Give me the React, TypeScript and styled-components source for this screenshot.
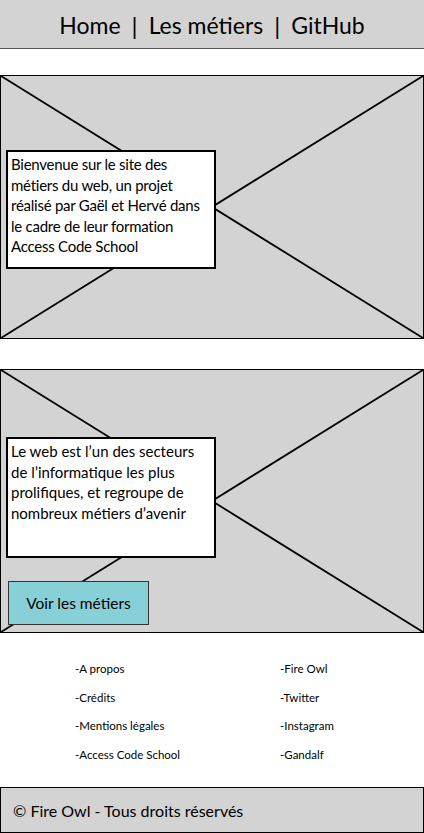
import React from "react";
import styled, { createGlobalStyle } from "styled-components";

const GlobalStyle = createGlobalStyle`
  body {
    margin: 0;
    font-family: "Lato", "Open Sans", sans-serif;
    color: #000;
    background: #fff;
  }
`;

const Page = styled.div`
  width: 424px;
  display: flex;
  flex-direction: column;
`;

const Header = styled.nav`
  box-sizing: content-box;
  height: 46px;
  padding-top: 2px;
  background: #d3d3d3;
  border-bottom: 1px solid #555;
  display: flex;
  align-items: center;
  justify-content: center;
  font-size: 23px;
  gap: 11px;
`;

const NavLink = styled.a`
  color: #000;
  text-decoration: none;
`;

const Sep = styled.span`
  font-size: 24px;
`;

const Hero = styled.section<{ $top: number; $pad: number }>`
  position: relative;
  box-sizing: border-box;
  height: 264px;
  margin-top: ${(p) => p.$top}px;
  border: 1px solid #000;
  background: #d3d3d3;
  display: flex;
  flex-direction: column;
  align-items: flex-start;
  padding: ${(p) => p.$pad}px 0 0 5px;
`;

const Cross = styled.svg`
  position: absolute;
  inset: 0;
  width: 100%;
  height: 100%;
`;

const TextBox = styled.div<{ $h: number; $ls: number }>`
  position: relative;
  box-sizing: border-box;
  width: 210px;
  height: ${(p) => p.$h}px;
  background: #fff;
  border: 2px solid #000;
  padding: 2px 0 0 3px;
  font-size: 15px;
  letter-spacing: ${(p) => p.$ls}px;
  line-height: 20.5px;
`;

const Button = styled.button`
  position: relative;
  box-sizing: border-box;
  margin-top: 23px;
  margin-left: 2px;
  width: 141px;
  height: 44px;
  background: #88d0d8;
  border: 1px solid #333;
  font-family: "Lato", "Open Sans", sans-serif;
  font-size: 15.5px;
  color: #000;
  padding: 0;
`;

const Links = styled.div`
  height: 154px;
  box-sizing: border-box;
  padding: 29px 0 0 75px;
  display: grid;
  grid-template-columns: 205px 1fr;
  grid-auto-rows: 28.7px;
  font-size: 11.5px;
  align-content: start;
`;

const LinkItem = styled.span`
  line-height: 14px;
`;

const Footer = styled.footer`
  box-sizing: border-box;
  height: 46px;
  border: 1px solid #000;
  background: #d3d3d3;
  display: flex;
  align-items: center;
  padding-left: 12px;
  font-size: 16px;
`;

const CrossLines = () => (
  <Cross viewBox="0 0 100 100" preserveAspectRatio="none">
    <line x1="0" y1="0" x2="100" y2="100" stroke="#000" strokeWidth="1.8" vectorEffect="non-scaling-stroke" />
    <line x1="0" y1="100" x2="100" y2="0" stroke="#000" strokeWidth="1.8" vectorEffect="non-scaling-stroke" />
  </Cross>
);

const left = ["-A propos", "-Crédits", "-Mentions légales", "-Access Code School"];
const right = ["-Fire Owl", "-Twitter", "-Instagram", "-Gandalf"];

export default function App() {
  return (
    <Page>
      <GlobalStyle />
      <Header>
        <NavLink href="#home">Home</NavLink>
        <Sep>|</Sep>
        <NavLink href="#metiers">Les métiers</NavLink>
        <Sep>|</Sep>
        <NavLink href="#github">GitHub</NavLink>
      </Header>

      <Hero $top={26} $pad={74}>
        <CrossLines />
        <TextBox $h={119} $ls={-0.25}>
          Bienvenue sur le site des métiers du web, un projet réalisé par Gaël et Hervé dans le cadre de leur formation Access Code School
        </TextBox>
      </Hero>

      <Hero $top={30} $pad={67}>
        <CrossLines />
        <TextBox $h={121} $ls={0}>
          Le web est l’un des secteurs de l’informatique les plus prolifiques, et regroupe de nombreux métiers d’avenir
        </TextBox>
        <Button>Voir les métiers</Button>
      </Hero>

      <Links>
        {left.map((l, i) => (
          <React.Fragment key={l}>
            <LinkItem>{l}</LinkItem>
            <LinkItem>{right[i]}</LinkItem>
          </React.Fragment>
        ))}
      </Links>

      <Footer>© Fire Owl - Tous droits réservés</Footer>
    </Page>
  );
}
